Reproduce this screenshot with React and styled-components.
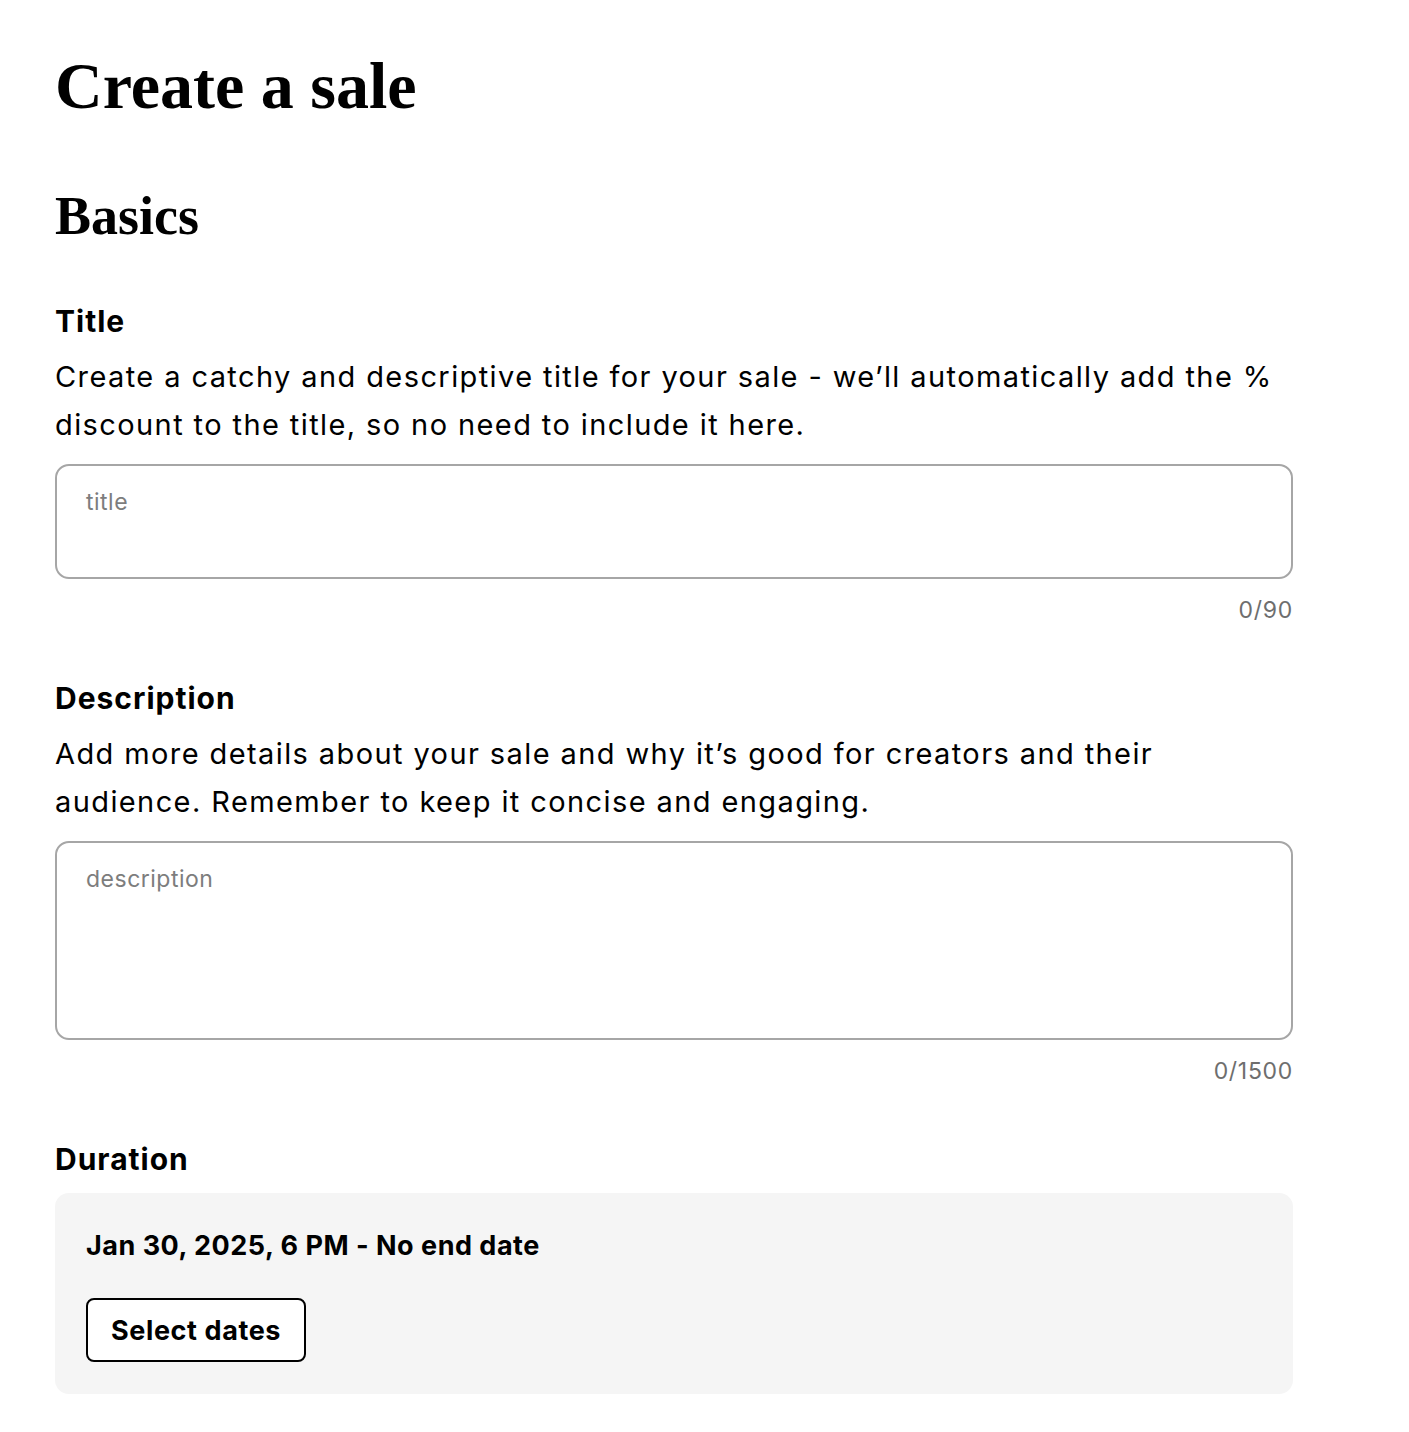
import styled, { createGlobalStyle } from "styled-components";

const Global = createGlobalStyle`
  body {
    margin: 0;
    background: #ffffff;
    color: #000000;
    font-family: Inter, "Noto Sans", sans-serif;
  }
`;

function Field({ label, help, placeholder, max, tall }) {
  return (
    <Section>
      <Label>{label}</Label>
      <Help>{help}</Help>
      <Box $tall={tall} placeholder={placeholder} />
      <Counter>0/{max}</Counter>
    </Section>
  );
}

export default function App() {
  return (
    <Page>
      <Global />
      <Heading>Create a sale</Heading>
      <SubHeading>Basics</SubHeading>
      <Field
        label="Title"
        help="Create a catchy and descriptive title for your sale - we’ll automatically add the % discount to the title, so no need to include it here."
        placeholder="title"
        max={90}
      />
      <Field
        label="Description"
        help="Add more details about your sale and why it’s good for creators and their audience. Remember to keep it concise and engaging."
        placeholder="description"
        max={1500}
        tall
      />
      <Section>
        <Label>Duration</Label>
        <Panel>
          <DateText>Jan 30, 2025, 6 PM - No end date</DateText>
          <Button>Select dates</Button>
        </Panel>
      </Section>
    </Page>
  );
}

const Page = styled.div`
  width: 1238px;
  padding: 40px 55px 38px;
`;

const Heading = styled.h1`
  margin: 0;
  font-family: "Liberation Serif", "DejaVu Serif", serif;
  font-size: 66px;
  font-weight: 700;
  line-height: 92px;
`;

const SubHeading = styled.h2`
  margin: 48px 0 0;
  font-family: "Liberation Serif", "DejaVu Serif", serif;
  font-size: 54px;
  font-weight: 700;
  line-height: 72px;
`;

const Section = styled.div`
  display: flex;
  flex-direction: column;
  margin-top: 53px;

  &:first-of-type {
    margin-top: 49px;
  }
`;

const Label = styled.div`
  font-size: 30px;
  font-weight: 700;
  line-height: 40px;
  letter-spacing: 1px;
`;

const Help = styled.p`
  margin: 12px 0 15px;
  font-size: 29px;
  line-height: 48px;
  letter-spacing: 1.4px;
  max-width: 1238px;
`;

const Box = styled.textarea`
  box-sizing: border-box;
  width: 100%;
  height: ${(p) => (p.$tall ? "199px" : "115px")};
  padding: 22px 29px;
  border: 2px solid #a6a6a6;
  border-radius: 14px;
  resize: none;
  font-family: Inter, "Noto Sans", sans-serif;
  font-size: 23px;
  line-height: 28px;
  letter-spacing: 0.5px;
  outline: none;

  &::placeholder {
    color: #7d7d7d;
  }
`;

const Counter = styled.div`
  margin-top: 16px;
  text-align: right;
  font-size: 23px;
  line-height: 30px;
  letter-spacing: 0.7px;
  color: #6e6e6e;
`;

const Panel = styled.div`
  display: flex;
  flex-direction: column;
  align-items: flex-start;
  gap: 34px;
  margin-top: 14px;
  padding: 35px 31px 32px;
  background: #f5f5f5;
  border-radius: 14px;
`;

const DateText = styled.div`
  font-size: 27px;
  font-weight: 700;
  line-height: 36px;
  letter-spacing: 0.5px;
`;

const Button = styled.button`
  box-sizing: border-box;
  height: 64px;
  padding: 0 23px;
  border: 2px solid #000;
  border-radius: 8px;
  background: #ffffff;
  color: #000;
  font-family: Inter, "Noto Sans", sans-serif;
  font-size: 27px;
  font-weight: 700;
  letter-spacing: 0.6px;
  cursor: pointer;
`;
